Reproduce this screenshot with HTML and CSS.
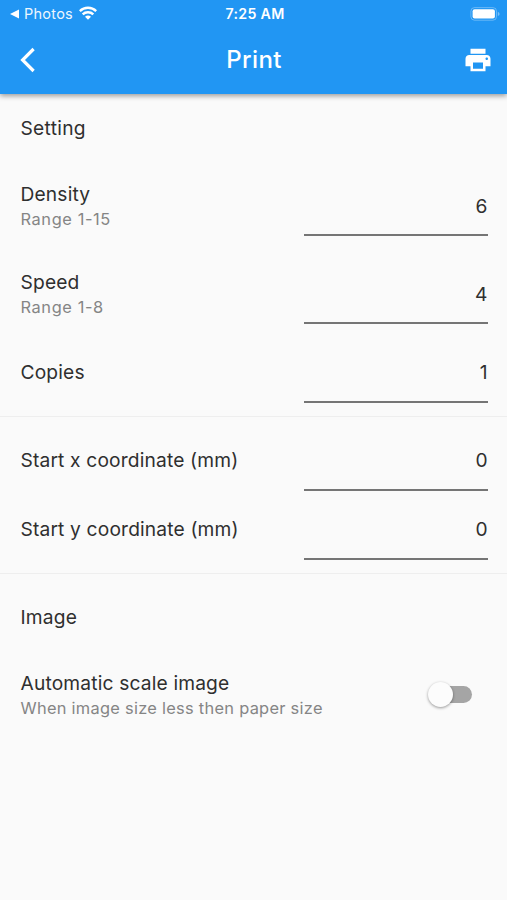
FILE: index.html
```html
<!DOCTYPE html>
<html lang="en">
<head>
<meta charset="utf-8">
<title>Print</title>
<link rel="stylesheet" href="styles.css">
</head>
<body>
<header class="appbar">
  <div class="status">
    <div class="status-left">
      <svg width="9" height="10" viewBox="0 0 9 10"><path d="M0 5 9 .5v9z" fill="#fff"/></svg>
      <span class="photos">Photos</span>
      <svg class="wifi" width="18" height="14" viewBox="0 0 18 14" fill="none" stroke="#fff" stroke-width="2.4"><path d="M.8 5.1a11.8 11.8 0 0 1 16.4 0M3.7 8.4a7.6 7.6 0 0 1 10.6 0"/><path d="M6 10.8a4.4 4.4 0 0 1 6 0L9 13.8z" fill="#fff" stroke="none"/></svg>
    </div>
    <div class="clock">7:25 AM</div>
    <div class="status-right">
      <svg width="30" height="14" viewBox="0 0 30 14"><rect x=".9" y=".6" width="25.6" height="12.6" rx="3.6" fill="none" stroke="#fff" stroke-opacity=".32"/><rect x="2.6" y="2.2" width="22.3" height="9.4" rx="2" fill="#fff"/><path d="M27.8 4.8q1.8.8 1.8 2.1t-1.8 2.1z" fill="#fff" fill-opacity=".4"/></svg>
    </div>
  </div>
  <div class="toolbar">
    <svg class="back" width="16" height="26" viewBox="0 0 16 26" fill="none" stroke="#fff" stroke-width="3.2"><path d="M14.6 2 3.600 13l11 11"/></svg>
    <h1 class="title">Print</h1>
    <svg class="printer" width="30" height="30" viewBox="0 0 24 24"><path fill="#fff" d="M19 8H5c-1.660 0-3 1.340-3 3v6h4v4h12v-4h4v-6c0-1.660-1.340-3-3-3zm-3 11H8v-5h8v5zm3-7c-.55 0-1-.45-1-1s.45-1 1-1 1 .45 1 1-.45 1-1 1zm-1-9H6v4h12V3z"/></svg>
  </div>
</header>
<main>
  <section class="row"><h2 class="label heading">Setting</h2></section>
  <section class="row tall">
    <div class="text"><div class="label">Density</div><div class="hint range">Range 1-15</div></div>
    <div class="field">6</div>
  </section>
  <section class="row tall">
    <div class="text"><div class="label">Speed</div><div class="hint range">Range 1-8</div></div>
    <div class="field">4</div>
  </section>
  <section class="row"><div class="label">Copies</div><div class="field">1</div></section>
  <hr class="divider">
  <section class="row"><div class="label">Start x coordinate (mm)</div><div class="field">0</div></section>
  <section class="row"><div class="label">Start y coordinate (mm)</div><div class="field">0</div></section>
  <hr class="divider">
  <section class="row"><h2 class="label">Image</h2></section>
  <section class="row tall">
    <div><div class="label">Automatic scale image</div><div class="hint">When image size less then paper size</div></div>
    <div class="switch"><div class="thumb"></div></div>
  </section>
</main>
</body>
</html>
```
FILE: styles.css
```css
* { box-sizing: border-box; }
body {
  margin: 0;
  height: 900px;
  overflow: hidden;
  background: #fafafa;
  color: #2f2f2f;
  font-family: Inter, "Liberation Sans", sans-serif;
}
svg { display: block; flex: none; }
.appbar {
  height: 93.5px;
  background: #2196f3;
  color: #fff;
  box-shadow: 0 2px 5px rgba(0, 0, 0, .38);
}
.status {
  display: grid;
  grid-template-columns: 1fr auto 1fr;
  align-items: center;
  height: 27px;
  padding: 0 7px 0 10px;
}
.status-left { display: flex; align-items: center; }
.photos { margin: 0 6px 0 5px; font-size: 14.5px; letter-spacing: .25px; opacity: .92; }
.wifi { margin-top: -2px; }
.clock { font-size: 14.2px; font-weight: 600; letter-spacing: .3px; }
.status-right { display: flex; justify-content: flex-end; }
.toolbar {
  display: grid;
  grid-template-columns: 1fr auto 1fr;
  align-items: center;
  height: 66px;
  padding: 0 14px 0 19px;
}
.title { margin: 0 4px 0 0; font-size: 24px; line-height: 30px; font-weight: 500; letter-spacing: .4px; }
.printer { justify-self: end; }
main { display: flex; flex-direction: column; }
.row {
  display: flex;
  align-items: center;
  justify-content: space-between;
  height: 68.6px;
  padding: 0 19.5px 0 20.5px;
}
.tall { height: 88.2px; }
.label { margin: 0; font-size: 19.2px; font-weight: 400; line-height: 25px; letter-spacing: .16px; }
.heading { padding-top: 2px; letter-spacing: .3px; }
.text { padding-top: 2px; }
.hint { font-size: 16.4px; line-height: 25px; letter-spacing: .28px; color: #858585; }
.range { letter-spacing: .6px; }
.field {
  width: 183.5px;
  height: 60px;
  border-bottom: 2px solid #757575;
  font-size: 19.2px;
  line-height: 58px;
  text-align: right;
}
.tall .field { line-height: 60px; }
.divider {
  width: 100%;
  height: 1px;
  margin: 9.3px 0;
  border: 0;
  background: #eeeeee;
}
.switch {
  width: 41px;
  height: 17px;
  margin: -3px 16px 0 0;
  border-radius: 9px;
  background: #a5a5a5;
}
.thumb {
  width: 25px;
  height: 25px;
  margin: -4px 0 0 -3px;
  border-radius: 50%;
  background: #fcfcfc;
  box-shadow: 0 1px 3px rgba(0, 0, 0, .4);
}
```
